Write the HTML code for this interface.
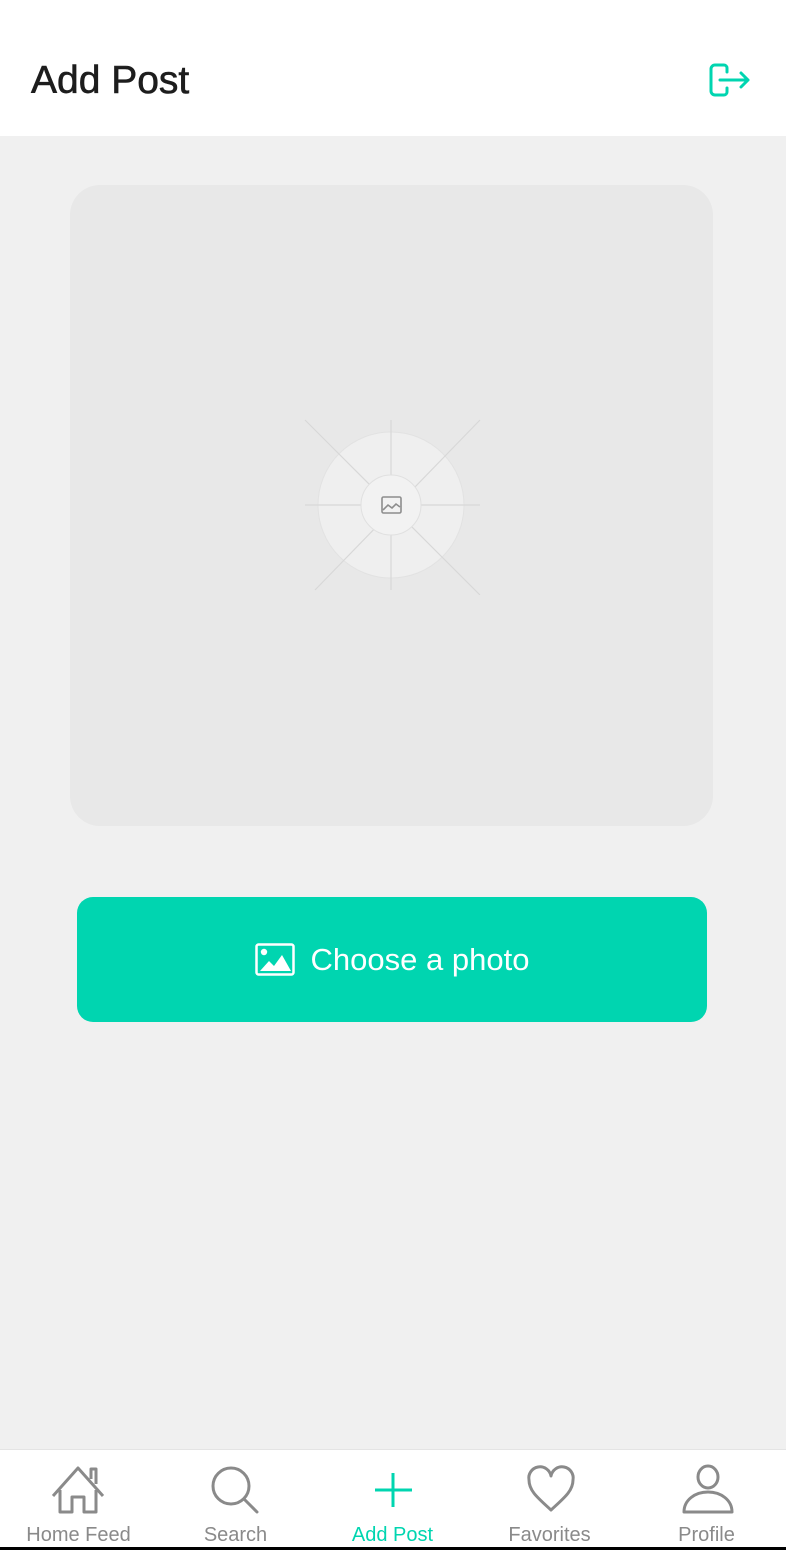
<!DOCTYPE html>
<html><head><meta charset="utf-8"><style>
*{margin:0;padding:0;box-sizing:border-box}
body{width:786px;height:1550px;background:#f0f0f0;font-family:"Liberation Sans",sans-serif;position:relative;overflow:hidden}
.hdr{position:absolute;left:0;top:0;width:786px;height:136px;background:#fff}
.hdr h1{position:absolute;left:31px;top:59px;font-size:39px;font-weight:normal;color:#1d1d1d;-webkit-text-stroke:0.6px #1d1d1d}
.box{position:absolute;left:70px;top:185px;width:643px;height:641px;background:#e8e8e8;border-radius:30px}
.btn{position:absolute;left:77px;top:897px;width:630px;height:125px;background:#00d5b0;border-radius:16px;color:#fff;font-size:31px;display:flex;align-items:center;justify-content:center;gap:16px}
.nav{position:absolute;left:0;top:1449px;width:786px;height:98px;background:#fff;border-top:1px solid #e4e4e4}
.bar{position:absolute;left:0;top:1547px;width:786px;height:3px;background:#000}
.it{position:absolute;top:0;width:157px;text-align:center;font-size:20px;color:#8a8a8a}
.it svg{position:absolute;top:14px;left:50%;margin-left:-28px;overflow:visible}
.it span{position:absolute;top:74px;left:0;width:100%}
</style></head><body>
<div class="hdr"><h1>Add Post</h1>
<svg style="position:absolute;left:708px;top:62px" width="44" height="36" viewBox="0 0 44 36" fill="none" stroke="#00d5b0" stroke-width="3" stroke-linecap="round" stroke-linejoin="round"><path d="M16 3H7a4 4 0 0 0-4 4v22a4 4 0 0 0 4 4h9a3 3 0 0 0 3-3v-4M19 10V6a3 3 0 0 0-3-3"/><path d="M12 18h28M33 11l7 7-7 7"/></svg>
</div>
<div class="box">
<svg style="position:absolute;left:230px;top:225px" width="185" height="185" viewBox="0 0 185 185" fill="none">
<circle cx="91" cy="95" r="73" fill="#efefef" stroke="#e2e2e2"/>
<g stroke="#d8d8d8" stroke-width="1.2"><path d="M91 10V180M5 95H180M5 10L180 185M180 10L15 180"/></g>
<circle cx="91" cy="95" r="30" fill="#f2f2f2" stroke="#e0e0e0"/>
<rect x="82" y="87" width="19" height="16" rx="1.5" stroke="#8d8d8d" stroke-width="1.6"/>
<path d="M83 100l5-5 4 3 4-4 4 3" stroke="#8d8d8d" stroke-width="1.6"/>
</svg></div>
<div class="btn"><svg width="40" height="33" viewBox="0 0 40 33" fill="none"><rect x="1.5" y="1.5" width="37" height="30" rx="2" stroke="#fff" stroke-width="2.5"/><circle cx="9" cy="9" r="3.2" fill="#fff"/><path d="M5 28l9-10 5 5 8-11 9 16z" fill="#fff"/></svg><span>Choose a photo</span></div>
<div class="nav">
<div class="it" style="left:0"><svg width="56" height="56" viewBox="0 0 56 56" fill="none" stroke="#8a8a8a" stroke-width="3" stroke-linejoin="round"><path d="M2 32L27 4l25 28M9 26v22h12V33h12v15h12V26M40 15V5h5v15"/></svg><span>Home Feed</span></div>
<div class="it" style="left:157px"><svg width="56" height="56" viewBox="0 0 56 56" fill="none" stroke="#8a8a8a" stroke-width="3" stroke-linecap="round"><circle cx="23" cy="22" r="18"/><path d="M36 35l13 13"/></svg><span>Search</span></div>
<div class="it" style="left:314px;color:#00d5b0"><svg width="56" height="56" viewBox="0 0 56 56" fill="none" stroke="#00d5b0" stroke-width="3"><path d="M28 9v34M10 26h37"/></svg><span>Add Post</span></div>
<div class="it" style="left:471px"><svg width="56" height="56" viewBox="0 0 56 56" fill="none" stroke="#8a8a8a" stroke-width="3" stroke-linejoin="round"><path d="M29 46C16 34 7 27 7 16a11 11 0 0 1 22-4 11 11 0 0 1 22 4c0 11-9 18-22 30z"/></svg><span>Favorites</span></div>
<div class="it" style="left:628px"><svg width="56" height="56" viewBox="0 0 56 56" fill="none" stroke="#8a8a8a" stroke-width="3" stroke-linejoin="round"><ellipse cx="29" cy="13" rx="10" ry="11"/><path d="M5 48c0-12 11-20 24-20s24 8 24 20z"/></svg><span>Profile</span></div>
</div>
<div class="bar"></div>
</body></html>
